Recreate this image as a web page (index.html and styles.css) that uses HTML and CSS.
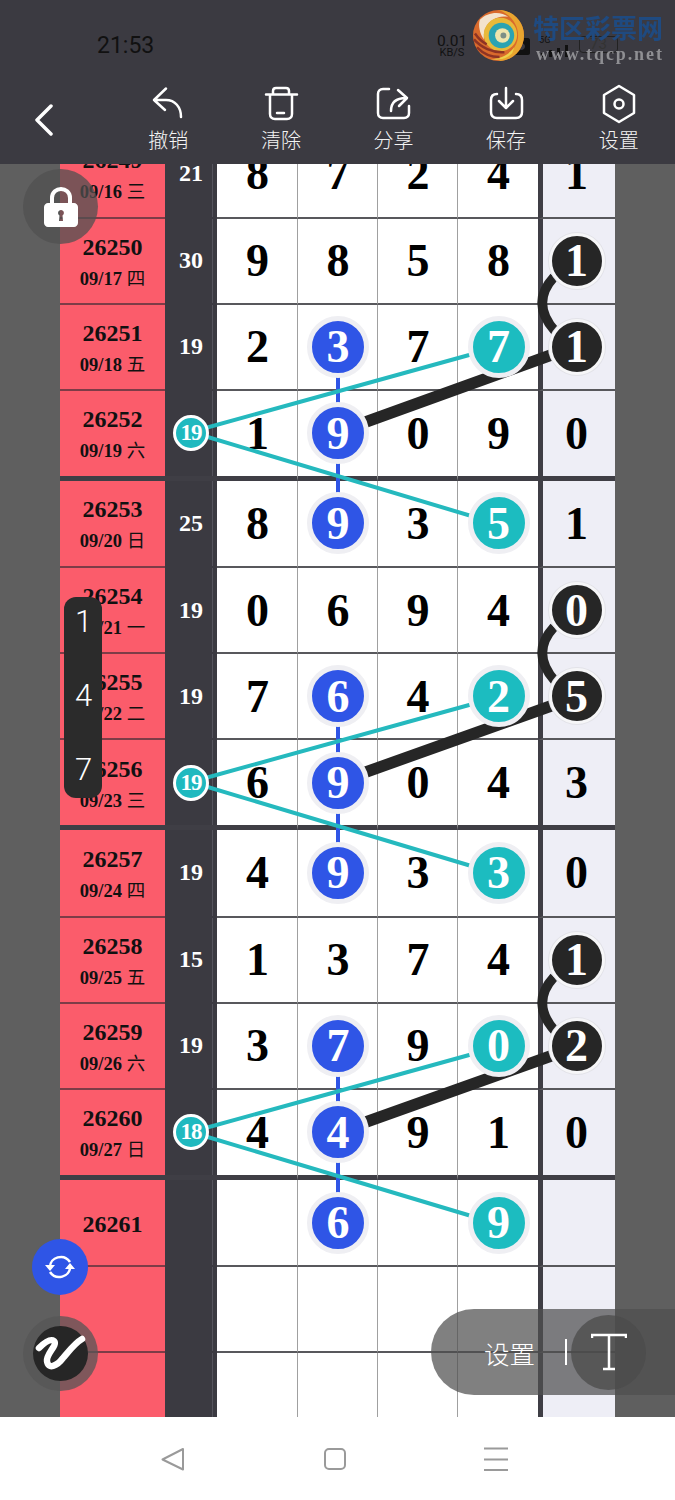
FILE: index.html
```html
<!DOCTYPE html>
<html lang="zh">
  <head>
    <meta charset="UTF-8" />
    <meta name="viewport" content="width=device-width, initial-scale=1.0" />
    <title>Chart</title>
    <link rel="stylesheet" href="styles.css">
  </head>
  <body>
    <!-- Header -->
    <div class="header">
      <div class="status">
        <span class="time">21:53</span>
        <div class="status-right">
          <div class="speed"><span>0.01</span><small>KB/S</small></div>
          <svg class="status-cam" viewBox="0 0 18 17"><path fill-rule="evenodd" d="M2 0H16C17 0 18 1 18 2V15C18 16 17 17 16 17H2C1 17 0 16 0 15V2C0 1 1 0 2 0ZM9 5C6.800 5 5 6.500 5 8.500S6.800 12 9 12 13 10.500 13 8.500 11.200 5 9 5Z" /></svg>
          <div class="signal">
            <small>5G</small>
            <svg viewBox="0 0 30 12"><path d="M2 12V8h3v4zM10 12V5h3v7zM18 12V3h3v9zM26 12V0h3v12z" /></svg>
          </div>
          <div class="battery">73</div>
        </div>
      </div>
      <div class="toolbar">
        <svg class="back" viewBox="0 0 20 32"><path d="M17 2 3 16l14 14" /></svg>
        <div class="tools">
          <div class="tool">
            <svg viewBox="0 0 34 34"><path d="M15 1.500 3 13l11 10M3 13h12c9 0 15 7 15 17" /></svg>
            <span>撤销</span>
          </div>
          <div class="tool">
            <svg viewBox="0 0 34 34"><path d="M2 7.500h31M9 7V4c0-2 1-3 3-3h10c2 0 3 1 3 3v3M6 8v19c0 3 2 5 5 5h12c3 0 5-2 5-5V8M13 26h7" /></svg>
            <span>清除</span>
          </div>
          <div class="tool">
            <svg viewBox="0 0 34 34"><path d="M13 2H7C4 2 2 4 2 7v19c0 3 2 5 5 5h21c3 0 5-2 5-5v-7M15 24c0-9 5-13 15-13M22 3l9 8-8 8" /></svg>
            <span>分享</span>
          </div>
          <div class="tool">
            <svg viewBox="0 0 34 34"><path d="M8 7C4 7 2 9 2 13v12c0 4 2 6 6 6h19c4 0 6-2 6-6V13c0-4-2-6-6-6M17 1v19M10 14l7 7 7-7" /></svg>
            <span>保存</span>
          </div>
          <div class="tool">
            <svg viewBox="0 0 34 34"><path d="M17-1 32 8v18L17 35 2 26V8z" /><circle cx="17" cy="17" r="4.500" /></svg>
            <span>设置</span>
          </div>
        </div>
      </div>
      <div class="watermark">
        <svg class="logo" viewBox="0 0 52 52">
          <circle cx="26" cy="26" r="26" fill="#d96a2c" />
          <path d="M26 0C41 0 52 12 52 26 52 40 41 52 26 52 38 46 46 36 46 26 46 14 38 4 26 0z" fill="#e9a52f" />
          <path d="M40 44C34 50 26 52 18 50 28 50 36 46 42 38z" fill="#eed04a" />
          <path d="M7 10C15 2 28 1 36 7 26 5 16 10 12 20 11 24 11 27 11 30 7 24 5 16 7 10z" fill="#f3e3cd" />
          <circle cx="28" cy="25" r="17" fill="#e8b93a" />
          <circle cx="29" cy="26" r="13" fill="#2ba3b2" />
          <circle cx="30" cy="26" r="7.500" fill="#efe5ad" />
          <circle cx="31" cy="26" r="3" fill="#7d8f86" />
          <path d="M1 30C8 38 20 44 32 43M4 38C10 44 18 48 27 48M2 24C6 30 10 33 14 35" fill="none" stroke="#8e3424" stroke-width="2.500" />
        </svg>
        <div class="mark-text">
          <b>特区彩票网</b>
          <span>www.tqcp.net</span>
        </div>
      </div>
    </div>

    <!-- Chart -->
    <div class="board">
      <div class="rows">
        <div class="row first">
          <div class="issue"><b>26249</b><span>09/16 <em>三</em></span></div><div class="sum">21</div>
          <div class="num">8</div><div class="num">7</div><div class="num">2</div><div class="num">4</div><div class="last">1</div>
        </div>
        <div class="row">
          <div class="issue"><b>26250</b><span>09/17 <em>四</em></span></div><div class="sum">30</div>
          <div class="num">9</div><div class="num">8</div><div class="num">5</div><div class="num">8</div><div class="last"><i class="ball black">1</i></div>
        </div>
        <div class="row">
          <div class="issue"><b>26251</b><span>09/18 <em>五</em></span></div><div class="sum">19</div>
          <div class="num">2</div><div class="num"><i class="ball blue">3</i></div><div class="num">7</div><div class="num"><i class="ball teal">7</i></div><div class="last"><i class="ball black">1</i></div>
        </div>
        <div class="row end">
          <div class="issue"><b>26252</b><span>09/19 <em>六</em></span></div><div class="sum"><i class="badge">19</i></div>
          <div class="num">1</div><div class="num"><i class="ball blue">9</i></div><div class="num">0</div><div class="num">9</div><div class="last">0</div>
        </div>

        <div class="row first">
          <div class="issue"><b>26253</b><span>09/20 <em>日</em></span></div><div class="sum">25</div>
          <div class="num">8</div><div class="num"><i class="ball blue">9</i></div><div class="num">3</div><div class="num"><i class="ball teal">5</i></div><div class="last">1</div>
        </div>
        <div class="row">
          <div class="issue"><b>26254</b><span>09/21 <em>一</em></span></div><div class="sum">19</div>
          <div class="num">0</div><div class="num">6</div><div class="num">9</div><div class="num">4</div><div class="last"><i class="ball black">0</i></div>
        </div>
        <div class="row">
          <div class="issue"><b>26255</b><span>09/22 <em>二</em></span></div><div class="sum">19</div>
          <div class="num">7</div><div class="num"><i class="ball blue">6</i></div><div class="num">4</div><div class="num"><i class="ball teal">2</i></div><div class="last"><i class="ball black">5</i></div>
        </div>
        <div class="row end">
          <div class="issue"><b>26256</b><span>09/23 <em>三</em></span></div><div class="sum"><i class="badge">19</i></div>
          <div class="num">6</div><div class="num"><i class="ball blue">9</i></div><div class="num">0</div><div class="num">4</div><div class="last">3</div>
        </div>

        <div class="row first">
          <div class="issue"><b>26257</b><span>09/24 <em>四</em></span></div><div class="sum">19</div>
          <div class="num">4</div><div class="num"><i class="ball blue">9</i></div><div class="num">3</div><div class="num"><i class="ball teal">3</i></div><div class="last">0</div>
        </div>
        <div class="row">
          <div class="issue"><b>26258</b><span>09/25 <em>五</em></span></div><div class="sum">15</div>
          <div class="num">1</div><div class="num">3</div><div class="num">7</div><div class="num">4</div><div class="last"><i class="ball black">1</i></div>
        </div>
        <div class="row">
          <div class="issue"><b>26259</b><span>09/26 <em>六</em></span></div><div class="sum">19</div>
          <div class="num">3</div><div class="num"><i class="ball blue">7</i></div><div class="num">9</div><div class="num"><i class="ball teal">0</i></div><div class="last"><i class="ball black">2</i></div>
        </div>
        <div class="row end">
          <div class="issue"><b>26260</b><span>09/27 <em>日</em></span></div><div class="sum"><i class="badge">18</i></div>
          <div class="num">4</div><div class="num"><i class="ball blue">4</i></div><div class="num">9</div><div class="num">1</div><div class="last">0</div>
        </div>

        <div class="row first">
          <div class="issue"><b>26261</b></div><div class="sum"></div>
          <div class="num"></div><div class="num"><i class="ball blue">6</i></div><div class="num"></div><div class="num"><i class="ball teal">9</i></div><div class="last"></div>
        </div>
        <div class="row">
          <div class="issue"></div><div class="sum"></div>
          <div class="num"></div><div class="num"></div><div class="num"></div><div class="num"></div><div class="last"></div>
        </div>
        <div class="row">
          <div class="issue"></div><div class="sum"></div>
          <div class="num"></div><div class="num"></div><div class="num"></div><div class="num"></div><div class="last"></div>
        </div>
      </div>

      <!-- connecting lines, page coordinates -->
      <svg class="lines" viewBox="0 164 675 1253">
        <g class="l-blue">
          <path d="M338 347V524M338 697V874M338 1047V1224" />
        </g>
        <g class="l-teal">
          <path d="M191 432 498 347M191 432 498 524M191 782 498 697M191 782 498 874M191 1132 498 1047M191 1132 498 1224" />
        </g>
        <g class="l-black">
          <path d="M338 432 576 346M338 782 576 697M338 1132 576 1047" />
        </g>
        <g class="l-arc">
          <path d="M554 277Q530 303 555 331M554 627Q530 653 555 681M554 977Q530 1003 555 1031" />
        </g>
      </svg>

      <!-- Floating controls -->
      <div class="lock">
        <svg viewBox="0 0 34 40"><path class="lock-ring" d="M8 18V11C8 -1 26 -1 26 11V18" /><path class="lock-body" fill-rule="evenodd" d="M4 16H30C32 16 34 18 34 20V36C34 38 32 40 30 40H4C2 40 0 38 0 36V20C0 18 2 16 4 16ZM17 23C14 23 13 27 15.500 28.500L15 34H19L18.500 28.500C21 27 20 23 17 23Z" /></svg>
      </div>
      <div class="keys"><span>1</span><span>4</span><span>7</span></div>
      <div class="sync">
        <svg viewBox="0 0 30 26"><path class="sync-arc" d="M5 13C5 3 19 -1 25 8M25 13C25 23 11 27 5 18" /><path class="sync-tip" d="M0 11H10L5 17ZM20 15H30L25 9Z" /></svg>
      </div>
      <div class="pen">
        <div class="pen-face">
          <svg viewBox="0 0 55 55"><path d="M6 22C11 17 17 12 21 15 25 19 13 28 14 35 15 44 24 40 30 32 36 25 42 17 49 13" /></svg>
        </div>
      </div>
      <div class="pill">
        <span class="pill-label">设置</span>
        <span class="pill-sep"></span>
        <div class="pill-t">
          <svg viewBox="0 0 36 38"><path d="M1 5V2H35V5M18 2V36M12 36H24" /></svg>
        </div>
      </div>
    </div>

    <!-- Navigation bar -->
    <div class="nav">
      <svg viewBox="0 0 24 24"><path d="M22 2V22.500L1.500 12.500Z" /></svg>
      <svg viewBox="0 0 24 24"><rect x="2" y="2" width="20" height="20" rx="4" /></svg>
      <svg viewBox="0 0 24 24"><path d="M0 1.500H24M0 12.500H24M0 23H24" /></svg>
    </div>
  </body>
</html>
```

FILE: styles.css
```css
* {
  box-sizing: border-box;
}
body {
  margin: 0;
  width: 675px;
  height: 1500px;
  overflow: hidden;
  background-color: #fff;
  font-family: "Liberation Serif", "Noto Sans CJK SC", serif;
}

/* header */
.header {
  position: relative;
  height: 164px;
  background-color: #3b3a41;
  font-family: Roboto, "Noto Sans CJK SC", sans-serif;
}
.status {
  height: 84px;
  padding: 31px 57px 0 97px;
  display: flex;
  justify-content: space-between;
  color: #111;
}
.time {
  font-size: 23px;
  line-height: 30px;
}
.status-right {
  display: flex;
  align-items: center;
  height: 30px;
}
.speed {
  display: flex;
  flex-direction: column;
  align-items: center;
  width: 30px;
  margin-right: 45px;
  font-size: 15.500px;
  line-height: 13px;
}
.speed small {
  font-size: 11px;
  line-height: 10px;
}
.status-cam {
  width: 18px;
  height: 17px;
  margin-right: 9px;
  fill: #111;
}
.signal {
  display: flex;
  flex-direction: column;
  width: 30px;
  margin-right: 10px;
  font-size: 11px;
  line-height: 10px;
}
.signal svg {
  width: 30px;
  height: 12px;
  fill: #111;
}
.battery {
  width: 39px;
  height: 17px;
  margin-top: -3px;
  border: 1px solid #222;
  border-radius: 4px;
  font-size: 15px;
  line-height: 15px;
  text-align: center;
  color: #333;
}
.toolbar {
  display: flex;
  height: 80px;
}
.back {
  width: 20px;
  height: 32px;
  margin: 20px 0 0 34px;
  fill: none;
  stroke: #fff;
  stroke-width: 3.500;
  stroke-linecap: round;
  stroke-linejoin: round;
}
.tools {
  display: flex;
  margin-left: 58px;
  flex: 1;
}
.tool {
  width: 112.600px;
  display: flex;
  flex-direction: column;
  align-items: center;
  gap: 7px;
  color: #f4f4f4;
  font-size: 20px;
  line-height: 26px;
  font-weight: 300;
}
.tool svg {
  width: 34px;
  height: 34px;
  margin-top: 3px;
  overflow: visible;
  fill: none;
  stroke: #fff;
  stroke-width: 2.500;
  stroke-linecap: round;
  stroke-linejoin: round;
}
.watermark {
  position: absolute;
  left: 473px;
  top: 10px;
  display: flex;
  gap: 9px;
}
.logo {
  width: 51px;
  height: 51px;
  filter: blur(0.4px);
}
.mark-text {
  display: flex;
  flex-direction: column;
  padding-top: 4px;
  filter: blur(0.5px);
}
.mark-text b {
  font-size: 26px;
  line-height: 30px;
  color: #1f4a80;
  white-space: nowrap;
}
.mark-text span {
  margin-left: 3px;
  font-family: "Liberation Serif", serif;
  font-size: 18px;
  font-weight: bold;
  line-height: 20px;
  letter-spacing: 1.900px;
  color: #8f8f93;
}

/* chart */
.board {
  position: relative;
  height: 1253px;
  overflow: hidden;
  background-color: #5f5f5f;
}
.rows {
  margin: -33px 0 0 60px;
  width: 555px;
}
.row {
  display: grid;
  grid-template-columns: 105px 52px 81px 80px 80px 80px 77px;
  height: 86px;
}
.row.first {
  height: 87.600px;
}
.row.end {
  height: 90px;
}
.row > div {
  display: flex;
  align-items: center;
  justify-content: center;
  border-bottom: 2px solid #58585c;
}
.row.end > div {
  border-bottom: 5px solid #3f3e45;
}
.issue {
  flex-direction: column;
  padding-top: 2px;
  background-color: #fb5c6b;
  font-weight: bold;
  color: #111;
}
.row > .issue {
  border-bottom-color: #7d3c47;
}
.issue b {
  font-size: 24px;
  line-height: 30px;
}
.issue span {
  margin-top: 2px;
  font-size: 18.500px;
  line-height: 26px;
}
.issue em {
  font-family: "Noto Sans CJK SC", sans-serif;
  font-style: normal;
  font-weight: 400;
}
.row > .sum {
  background-color: #3b3a41;
  border-bottom-color: #3b3a41;
  box-shadow: inset -4px 0 0 #3b3a41, inset -5px 0 0 #55545d;
  color: #fff;
  font-size: 24px;
  font-weight: bold;
}
.num,
.last {
  font-size: 46px;
  font-weight: bold;
  color: #000;
}
.num {
  padding-left: 1px;
  background-color: #fff;
  border-right: 1px solid #a0a0a0;
}
.num:nth-child(6) {
  border-right: none;
}
.last {
  background-color: #eeeef6;
  border-left: 5px solid #3f3e45;
  padding-right: 5px;
}
.ball {
  position: relative;
  z-index: 2;
  width: 62px;
  height: 62px;
  display: flex;
  flex-shrink: 0;
  align-items: center;
  justify-content: center;
  border: 5px solid #efeff3;
  border-radius: 50%;
  font-style: normal;
  color: #fff;
}
.ball.blue {
  background-color: #2f55e6;
}
.ball.teal {
  background-color: #1cbcc0;
}
.ball.black {
  width: 56px;
  height: 56px;
  border: 3px solid #f6f6f8;
  box-shadow: 0 0 0 1px #e2e2e8;
  background-color: #262626;
}
.badge {
  position: relative;
  z-index: 2;
  width: 36px;
  height: 36px;
  display: flex;
  align-items: center;
  justify-content: center;
  border: 3px solid #fff;
  border-radius: 50%;
  background-color: #1fb9bf;
  font-style: normal;
  font-size: 23px;
  letter-spacing: -1px;
}
.lines {
  position: absolute;
  left: 0;
  top: 0;
  z-index: 1;
  width: 675px;
  height: 1253px;
  fill: none;
}
.l-blue {
  stroke: #2f55e6;
  stroke-width: 4;
}
.l-teal {
  stroke: #25b9be;
  stroke-width: 4;
}
.l-black {
  stroke: #262626;
  stroke-width: 11.500;
}
.l-arc {
  stroke: #262626;
  stroke-width: 9.500;
}

/* floating controls */
.lock {
  position: absolute;
  left: 23px;
  top: 5px;
  z-index: 3;
  width: 75px;
  height: 75px;
  display: flex;
  align-items: center;
  justify-content: center;
  border-radius: 50%;
  background-color: rgba(80, 80, 80, 0.75);
}
.lock svg {
  width: 34px;
  height: 40px;
}
.lock-ring {
  fill: none;
  stroke: #fff;
  stroke-width: 4;
}
.lock-body {
  fill: #fff;
}
.keys {
  position: absolute;
  left: 64px;
  top: 433px;
  z-index: 3;
  width: 38px;
  height: 201px;
  display: flex;
  flex-direction: column;
  align-items: center;
  justify-content: space-between;
  padding: 7px 0 10px 1px;
  border-radius: 12px;
  background-color: #2b2b2b;
  font-family: Roboto, sans-serif;
  font-weight: 300;
  font-size: 31px;
  line-height: 36px;
  color: #fff;
}
.sync {
  position: absolute;
  left: 32px;
  top: 1075px;
  z-index: 3;
  width: 56px;
  height: 56px;
  display: flex;
  align-items: center;
  justify-content: center;
  border-radius: 50%;
  background-color: #2f55e6;
}
.sync svg {
  width: 30px;
  height: 26px;
}
.sync-arc {
  fill: none;
  stroke: #fff;
  stroke-width: 2.500;
}
.sync-tip {
  fill: #fff;
}
.pen {
  position: absolute;
  left: 23px;
  top: 1152px;
  z-index: 3;
  width: 75px;
  height: 75px;
  padding: 10px;
  border-radius: 50%;
  background-color: rgba(85, 85, 85, 0.75);
}
.pen-face {
  width: 55px;
  height: 55px;
  border-radius: 50%;
  background-color: #262626;
}
.pen svg {
  width: 55px;
  height: 55px;
  fill: none;
  stroke: #fff;
  stroke-width: 6.500;
  stroke-linecap: round;
  stroke-linejoin: round;
}
.pill {
  position: absolute;
  left: 431px;
  top: 1145px;
  z-index: 3;
  width: 244px;
  height: 86px;
  display: flex;
  align-items: center;
  padding-left: 53px;
  border-radius: 43px 0 0 43px;
  background-color: rgba(79, 79, 79, 0.72);
  color: #fff;
  font-family: "Noto Sans CJK SC", sans-serif;
  font-size: 25.500px;
  font-weight: 300;
}
.pill-sep {
  width: 2px;
  height: 26px;
  margin-left: 30px;
  background-color: #fff;
}
.pill-t {
  width: 75px;
  height: 75px;
  margin-left: 4px;
  display: flex;
  align-items: center;
  justify-content: center;
  border-radius: 50%;
  background-color: rgba(75, 75, 75, 0.75);
}
.pill-t svg {
  width: 36px;
  height: 38px;
  fill: none;
  stroke: #fff;
  stroke-width: 2.500;
}

/* navigation bar */
.nav {
  height: 83px;
  display: flex;
  align-items: center;
  justify-content: space-between;
  padding: 0 167px 0 161px;
  background-color: #fff;
}
.nav svg {
  width: 24px;
  height: 24px;
  overflow: visible;
  fill: none;
  stroke: #9a9a9a;
  stroke-width: 2;
  stroke-linejoin: round;
}
```
